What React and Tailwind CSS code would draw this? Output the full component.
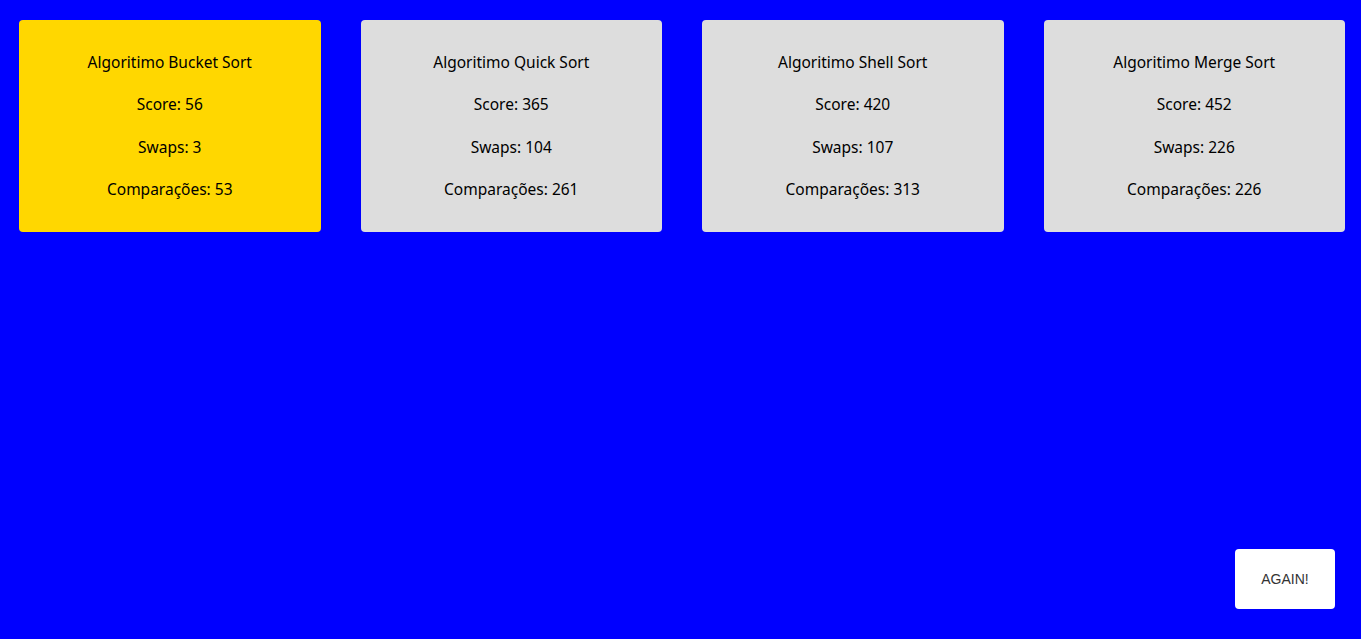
export default function App() {
  const cards = [
    { name: "Algoritimo Bucket Sort", score: 56, swaps: 3, comp: 53, best: true },
    { name: "Algoritimo Quick Sort", score: 365, swaps: 104, comp: 261 },
    { name: "Algoritimo Shell Sort", score: 420, swaps: 107, comp: 313 },
    { name: "Algoritimo Merge Sort", score: 452, swaps: 226, comp: 226 },
  ];
  return (
    <div className="h-screen bg-[#0000ff] flex flex-col">
      <div className="grid grid-cols-4 gap-x-10 pl-[19px] pr-[16px] pt-5">
        {cards.map((c) => (
          <div
            key={c.name}
            className={`${c.best ? "bg-[#ffd700]" : "bg-[#dddddd]"} rounded flex flex-col items-center gap-4 pt-[29px] pb-[30px] text-black text-[15.5px] leading-[26.3px] font-['Noto_Sans',sans-serif]`}
          >
            <p>{c.name}</p>
            <p>Score: {c.score}</p>
            <p>Swaps: {c.swaps}</p>
            <p>Comparações: {c.comp}</p>
          </div>
        ))}
      </div>
      <button className="mt-auto self-end mr-[26px] mb-[30px] w-[100px] h-[60px] bg-white rounded text-[14px] text-[#333333] font-['Liberation_Sans',Arial,sans-serif]">
        AGAIN!
      </button>
    </div>
  );
}
